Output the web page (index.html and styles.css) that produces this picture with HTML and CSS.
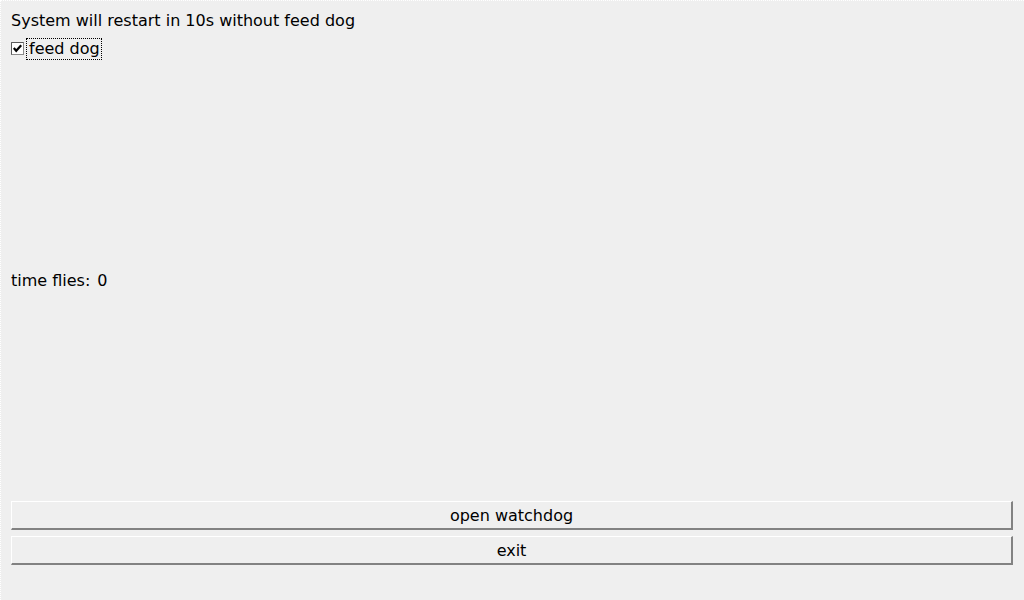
FILE: index.html
```html
<!DOCTYPE html>
<html>
<head>
<meta charset="utf-8">
<link rel="stylesheet" href="styles.css">
</head>
<body>
<div class="app">
  <div class="title">System will restart in 10s without feed dog</div>
  <div class="check-row">
    <span class="box">
      <svg width="13" height="13" viewBox="0 0 13 13">
        <rect x="0.5" y="0.5" width="12" height="12" fill="#ffffff" stroke="#8a8a8a"/>
        <path d="M0.5 12.5 V0.5 H12.5" fill="none" stroke="#5a5a5a"/>
        <path d="M2.8 6 L5.2 8.8 L10.2 3.2" fill="none" stroke="#000" stroke-width="2.2"/>
      </svg>
    </span>
    <span class="check-label">feed dog</span>
  </div>
  <div class="spacer"></div>
  <div class="time-row"><span>time flies:</span><span class="count">0</span></div>
  <div class="spacer"></div>
  <div class="buttons">
    <button class="btn">open watchdog</button>
    <button class="btn">exit</button>
  </div>
</div>
</body>
</html>
```
FILE: styles.css
```css
html, body {
  margin: 0;
  padding: 0;
  background: #efefef;
}
.app {
  box-sizing: border-box;
  width: 1024px;
  height: 600px;
  padding: 10px 11px 35px 11px;
  display: flex;
  flex-direction: column;
  font-family: "DejaVu Sans", sans-serif;
  font-size: 16px;
  color: #000;
  border-left: 1px dotted #ffffff;
  border-top: 1px dotted #ffffff;
}
.title {
  height: 20px;
  line-height: 20px;
  margin-left: -1px;
}
.check-row {
  margin-top: 7px;
  height: 22px;
  display: flex;
  align-items: center;
  margin-left: -1px;
}
.box {
  width: 13px;
  height: 13px;
  display: block;
  margin-right: 2px;
  margin-top: -1px;
}
.box svg { display: block; }
.check-label {
  border: 1px dotted #000;
  height: 20px;
  line-height: 20px;
  padding: 0 1px 0 2px;
}
.spacer { flex: 1; }
.time-row {
  height: 20px;
  line-height: 20px;
  display: flex;
  gap: 7px;
  margin-left: -1px;
}
.buttons {
  display: flex;
  flex-direction: column;
  gap: 6px;
  margin-left: -1px;
}
.btn {
  box-sizing: border-box;
  width: 1002px;
  height: 29px;
  margin: 0;
  padding: 1px 0 0 0;
  background: #efefef;
  border-top: 1px solid #ffffff;
  border-left: 1px solid #ffffff;
  border-right: 2px solid #828282;
  border-bottom: 2px solid #828282;
  font-family: "DejaVu Sans", sans-serif;
  font-size: 16px;
  color: #000;
  line-height: 25px;
}
```
